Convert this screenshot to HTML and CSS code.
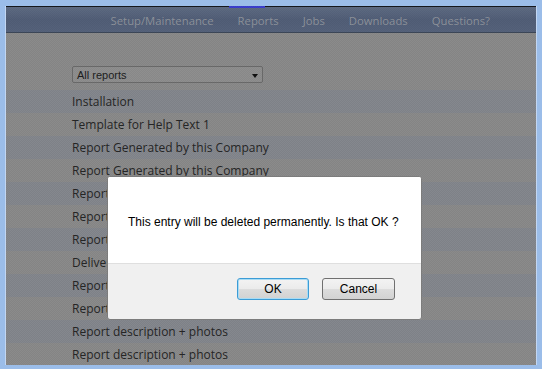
FILE: index.html
```html
<!DOCTYPE html>
<html lang="en">
<head>
<meta charset="utf-8" />
<title>Reports</title>
<link rel="stylesheet" href="styles.css">
</head>
<body>
<div id="frame">
  <nav class="topnav">
    <span class="topnav-mark"></span>
    <a>Setup/Maintenance</a>
    <a>Reports</a>
    <a>Jobs</a>
    <a>Downloads</a>
    <a>Questions?</a>
  </nav>
  <main class="content">
    <div class="filter">
      <span>All reports</span>
      <span class="caret"></span>
    </div>
    <ul class="report-list">
      <li>Installation</li>
      <li>Template for Help Text 1</li>
      <li>Report Generated by this Company</li>
      <li>Report Generated by this Company</li>
      <li>Report Generated by this Company</li>
      <li>Report Generated by this Company</li>
      <li>Report description + photos</li>
      <li>Delivery note</li>
      <li>Report description + photos</li>
      <li>Report description + photos</li>
      <li>Report description + photos</li>
      <li>Report description + photos</li>
    </ul>
  </main>
  <div class="mask"></div>
  <div class="dialog-wrap">
    <div class="dialog">
      <div class="dialog-body">This entry will be deleted permanently. Is that OK ?</div>
      <div class="dialog-foot">
        <button class="btn btn-ok">OK</button>
        <button class="btn">Cancel</button>
      </div>
    </div>
  </div>
</div>
</body>
</html>
```

FILE: styles.css
```css
*{box-sizing:border-box;}
html,body{height:100%;}
body{
  margin:0;
  background:#9bbde9;
  padding:6px 5px 4px 5px;
  font-family:'Open Sans',sans-serif;
  overflow:hidden;
}
#frame{
  position:relative;
  height:100%;
  border-left:1px solid #c2d6f2;
  border-right:1px solid #c2d6f2;
  background:#8b8b8b;
  overflow:hidden;
}

/* top menu */
.topnav{
  position:relative;
  height:27px;
  border-top:1px solid #15181d;
  border-bottom:1px solid #3d4859;
  background:linear-gradient(#5f6c84,#525f78 50%,#56637c);
  display:flex;
  justify-content:flex-end;
  align-items:center;
  gap:24px;
  padding:1px 46px 0 0;
}
.topnav a{color:#8e939c;font-size:11.3px;}
.topnav-mark{position:absolute;left:223px;top:-1px;width:36px;height:2px;background:#3c3fd0;}

/* list */
.content{padding:33px 0 0 66px;}
.filter{
  width:191px;
  height:17px;
  border:1px solid #6b6b6b;
  border-radius:2px;
  background:#8f8f8f;
  display:flex;
  justify-content:space-between;
  align-items:center;
  padding:0 4px 0 4px;
  font-family:'Liberation Sans',Arial,sans-serif;
  font-size:11px;
  color:#1e1e1e;
}
.caret{width:0;height:0;border-left:3px solid transparent;border-right:3px solid transparent;border-top:4px solid #111;margin-top:2px;}
.report-list{list-style:none;margin:7px 0 0 -66px;padding:0;}
.report-list li{
  height:23px;
  line-height:24px;
  padding-left:66px;
  font-size:12px;
  color:#262626;
}
.report-list li:nth-child(odd){background:#85888e;}

/* modal */
.mask{
  position:absolute;
  inset:0;
  background-image:repeating-conic-gradient(rgba(0,0,0,.05) 0 25%,transparent 0 50%);
  background-size:2px 2px;
}
.dialog-wrap{position:absolute;left:101px;top:170px;}
.dialog{
  width:315px;
  border:1px solid #7c7c7c;
  border-radius:3px;
  background:#f0f0f0;
  font-family:'Liberation Sans',Arial,sans-serif;
  font-size:12px;
  color:#000;
  overflow:hidden;
}
.dialog-body{
  height:87px;
  background:#fff;
  border-bottom:1px solid #dfdfdf;
  display:flex;
  align-items:center;
  padding:4px 0 0 20px;
}
.dialog-foot{
  height:55px;
  display:flex;
  justify-content:flex-end;
  gap:13px;
  padding:14px 26px 0 0;
}
.btn{
  width:73px;
  height:22px;
  border:1px solid #707070;
  border-radius:3px;
  background:linear-gradient(#f3f3f3 0,#ebebeb 50%,#dcdcdc 51%,#d2d2d2);
  font-family:'Liberation Sans',Arial,sans-serif;
  font-size:12px;
  color:#000;
  padding:0;
}
.btn-ok{width:72px;border-color:#3c9cd6;box-shadow:inset 0 0 0 1px #a8dcf5;}
```
